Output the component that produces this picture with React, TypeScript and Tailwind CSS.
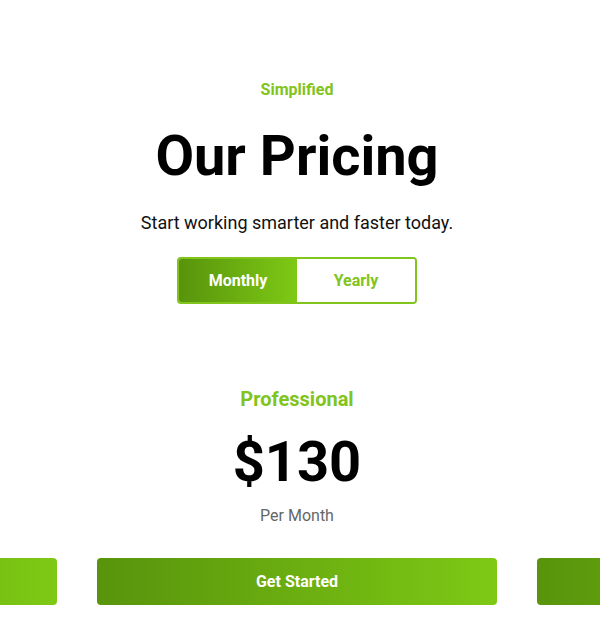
import React, { useState } from "react";

const plans = [
  { name: "Basic", price: "$60" },
  { name: "Professional", price: "$130" },
  { name: "Enterprise", price: "$250" },
];

export const App = () => {
  const [billing, setBilling] = useState<"monthly" | "yearly">("monthly");

  return (
    <div className="min-h-[639px] overflow-hidden bg-white font-['Roboto',sans-serif]">
      <div className="w-[594px] pt-[79px] flex flex-col items-center text-center">
        <p className="text-[16px] leading-[22px] font-bold text-[#80c41c]">Simplified</p>
        <h1 className="mt-[22px] text-[56px] leading-[66px] font-bold text-black">Our Pricing</h1>
        <p className="mt-[22px] text-[18px] leading-[24px] text-[#111]">
          Start working smarter and faster today.
        </p>
        <div className="mt-[22px] flex h-[47px] w-[240px] rounded-[4px] border-2 border-[#80c41c] overflow-hidden">
          <button
            onClick={() => setBilling("monthly")}
            className={
              billing === "monthly"
                ? "flex-1 bg-gradient-to-r from-[#58940c] to-[#7ec915] text-white text-[16px] font-bold"
                : "flex-1 bg-white text-[#80c41c] text-[16px] font-bold"
            }
          >
            Monthly
          </button>
          <button
            onClick={() => setBilling("yearly")}
            className={
              billing === "yearly"
                ? "flex-1 bg-gradient-to-r from-[#58940c] to-[#7ec915] text-white text-[16px] font-bold"
                : "flex-1 bg-white text-[#80c41c] text-[16px] font-bold"
            }
          >
            Yearly
          </button>
        </div>
      </div>

      {/* slider: neighbours peek in at the sides */}
      <div className="mt-[82px] flex gap-10 ml-[-343px]">
        {plans.map((p) => (
          <div key={p.name} className="w-[400px] shrink-0 flex flex-col items-center text-center">
            <h3 className="text-[20px] leading-[26px] font-bold text-[#80c41c]">{p.name}</h3>
            <div className="mt-[20px] text-[56px] leading-[60px] font-bold text-black">{p.price}</div>
            <p className="mt-[13px] text-[16px] leading-[22px] text-[#666]">Per Month</p>
            <button className="mt-[31px] w-full h-[47px] rounded-[4px] bg-gradient-to-r from-[#58940c] to-[#7ec915] text-white text-[16px] font-bold">
              Get Started
            </button>
          </div>
        ))}
      </div>
    </div>
  );
};

export default App;
